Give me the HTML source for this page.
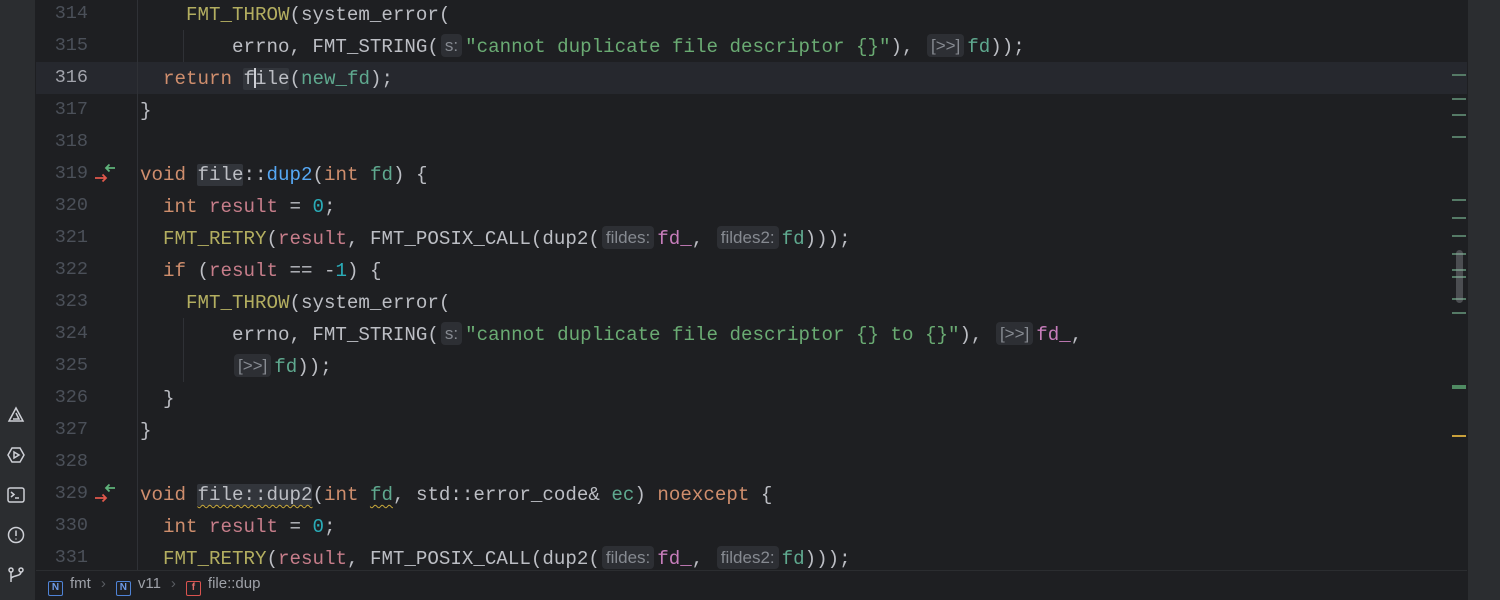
<!DOCTYPE html>
<html><head><meta charset="utf-8"><style>
*{margin:0;padding:0;box-sizing:border-box}
body{width:1500px;height:600px;background:#1e1f22;overflow:hidden;position:relative;font-family:"Liberation Mono",monospace;}
#side{position:absolute;left:0;top:0;width:36px;height:600px;background:#2b2d30;border-right:1px solid #1e1f22}
#rbar{position:absolute;left:1467px;top:0;width:33px;height:600px;background:#2b2d30;border-left:1px solid #1e1f22}
.cur{position:absolute;left:36px;top:62px;width:1431px;height:32px;background:#26282e}
.ln{position:absolute;left:36px;width:52px;text-align:right;font-size:18.5px;color:#4b5059;line-height:32px;height:32px;top:0}
.code{position:absolute;left:140px;font-size:19.17px;line-height:32px;height:32px;white-space:pre;color:#bcbec4;margin-top:1px}
.k{color:#cf8e6d}.m{color:#b3ae60}.f{color:#56a8f5}.p{color:#5fa98f}.v{color:#c77dbb}.r{color:#c67d8a}.s{color:#6aab73}.n{color:#2aacb8}
.h{display:inline-block;font-family:"Liberation Sans",sans-serif;font-size:17px;color:#868a91;background:#2d2f34;border-radius:4px;padding:0 4px;line-height:23px;margin:0 3px 0 2px;vertical-align:1px}
.hl{background:#32353b;border-radius:2px}
.sq{text-decoration:underline wavy #c9a93b;text-underline-offset:4px;text-decoration-thickness:1px}
.guide{position:absolute;width:1px;background:#2f3136}
.mk{position:absolute;left:1452px;width:14px;height:2px;background:#557a66}
#bc{position:absolute;left:36px;top:570px;width:1431px;height:30px;border-top:1px solid #2b2d30;font-family:"Liberation Sans",sans-serif;font-size:15px;color:#9ea1a8;line-height:26px}
.bi{display:inline-block;width:15px;height:15px;border:1.5px solid #4f83d6;border-radius:2px;font-size:10px;line-height:12px;text-align:center;color:#6e9be8;vertical-align:-2px;margin-right:7px;font-weight:bold}
.ic{position:absolute;left:6px;width:20px;height:20px}
</style></head><body>
<div id="side">
<svg class="ic" style="top:405px" viewBox="0 0 20 20" fill="none" stroke="#ced0d6" stroke-width="1.5"><path d="M10 3L17 16H3Z"/><path d="M10 8L13 14H7"/></svg>
<svg class="ic" style="top:445px" viewBox="0 0 20 20" fill="none" stroke="#ced0d6" stroke-width="1.5"><path d="M6 3H14L18 10L14 17H6L2 10Z"/><path d="M8 7L13 10L8 13Z"/></svg>
<svg class="ic" style="top:485px" viewBox="0 0 20 20" fill="none" stroke="#ced0d6" stroke-width="1.5"><rect x="2" y="3" width="16" height="14" rx="2"/><path d="M5 7L8 9.5L5 12M9 13H13"/></svg>
<svg class="ic" style="top:525px" viewBox="0 0 20 20" fill="none" stroke="#ced0d6" stroke-width="1.5"><circle cx="10" cy="10" r="7.5"/><path d="M10 5.5V11M10 13.5V14.5"/></svg>
<svg class="ic" style="top:565px" viewBox="0 0 20 20" fill="none" stroke="#ced0d6" stroke-width="1.5"><circle cx="5" cy="5" r="2"/><circle cx="15" cy="5" r="2"/><path d="M5 7V17M15 7C15 12 5 10 5 14"/></svg>
</div>
<div class="cur"></div>
<div class="guide" style="left:137px;top:0;height:570px"></div>
<div class="guide" style="left:183px;top:30px;height:32px"></div>
<div class="guide" style="left:183px;top:318px;height:64px"></div>

<div class="ln" style="top:-2px">314</div>
<div class="ln" style="top:30px">315</div>
<div class="ln" style="top:62px;color:#a1a3ab">316</div>
<div class="ln" style="top:94px">317</div>
<div class="ln" style="top:126px">318</div>
<div class="ln" style="top:158px">319</div>
<div class="ln" style="top:190px">320</div>
<div class="ln" style="top:222px">321</div>
<div class="ln" style="top:254px">322</div>
<div class="ln" style="top:286px">323</div>
<div class="ln" style="top:318px">324</div>
<div class="ln" style="top:350px">325</div>
<div class="ln" style="top:382px">326</div>
<div class="ln" style="top:414px">327</div>
<div class="ln" style="top:446px">328</div>
<div class="ln" style="top:478px">329</div>
<div class="ln" style="top:510px">330</div>
<div class="ln" style="top:542px">331</div>

<svg style="position:absolute;left:92px;top:160px" width="26" height="26" viewBox="0 0 26 26" fill="none" stroke-width="1.8"><path d="M23 8H14M17.5 4.5L14 8L17.5 11.5" stroke="#5fb37a"/><path d="M3 18H14M10.5 14.5L14 18L10.5 21.5" stroke="#e0584b"/></svg>
<svg style="position:absolute;left:92px;top:480px" width="26" height="26" viewBox="0 0 26 26" fill="none" stroke-width="1.8"><path d="M23 8H14M17.5 4.5L14 8L17.5 11.5" stroke="#5fb37a"/><path d="M3 18H14M10.5 14.5L14 18L10.5 21.5" stroke="#e0584b"/></svg>

<div class="code" style="top:-2px">    <span class="m">FMT_THROW</span>(system_error(</div>
<div class="code" style="top:30px">        errno, FMT_STRING(<span class="h">s:</span><span class="s">"cannot duplicate file descriptor {}"</span>), <span class="h">[&gt;&gt;]</span><span class="p">fd</span>));</div>
<div class="code" style="top:62px">  <span class="k">return</span> <span class="hl">file</span>(<span class="p">new_fd</span>);</div>
<div style="position:absolute;left:254px;top:68px;width:2px;height:20px;background:#ced0d6"></div>
<div class="code" style="top:94px">}</div>
<div class="code" style="top:158px"><span class="k">void</span> <span class="hl">file</span>::<span class="f">dup2</span>(<span class="k">int</span> <span class="p">fd</span>) {</div>
<div class="code" style="top:190px">  <span class="k">int</span> <span class="r">result</span> = <span class="n">0</span>;</div>
<div class="code" style="top:222px">  <span class="m">FMT_RETRY</span>(<span class="r">result</span>, FMT_POSIX_CALL(dup2(<span class="h">fildes:</span><span class="v">fd_</span>, <span class="h">fildes2:</span><span class="p">fd</span>)));</div>
<div class="code" style="top:254px">  <span class="k">if</span> (<span class="r">result</span> == -<span class="n">1</span>) {</div>
<div class="code" style="top:286px">    <span class="m">FMT_THROW</span>(system_error(</div>
<div class="code" style="top:318px">        errno, FMT_STRING(<span class="h">s:</span><span class="s">"cannot duplicate file descriptor {} to {}"</span>), <span class="h">[&gt;&gt;]</span><span class="v">fd_</span>,</div>
<div class="code" style="top:350px">        <span class="h">[&gt;&gt;]</span><span class="p">fd</span>));</div>
<div class="code" style="top:382px">  }</div>
<div class="code" style="top:414px">}</div>
<div class="code" style="top:478px"><span class="k">void</span> <span class="hl sq">file::dup2</span>(<span class="k">int</span> <span class="p sq">fd</span>, std::error_code&amp; <span class="p">ec</span>) <span class="k">noexcept</span> {</div>
<div class="code" style="top:510px">  <span class="k">int</span> <span class="r">result</span> = <span class="n">0</span>;</div>
<div class="code" style="top:542px">  <span class="m">FMT_RETRY</span>(<span class="r">result</span>, FMT_POSIX_CALL(dup2(<span class="h">fildes:</span><span class="v">fd_</span>, <span class="h">fildes2:</span><span class="p">fd</span>)));</div>

<div class="mk" style="top:74px"></div><div class="mk" style="top:98px"></div><div class="mk" style="top:114px"></div><div class="mk" style="top:136px"></div>
<div class="mk" style="top:199px"></div><div class="mk" style="top:217px"></div><div class="mk" style="top:235px"></div><div class="mk" style="top:253px"></div>
<div class="mk" style="top:269px"></div><div class="mk" style="top:276px"></div><div class="mk" style="top:298px"></div><div class="mk" style="top:312px"></div>
<div class="mk" style="top:385px;height:4px;background:#4f8a62"></div>
<div class="mk" style="top:435px;background:#c9a03b"></div>
<div style="position:absolute;left:1456px;top:250px;width:7px;height:53px;border-radius:4px;background:rgba(160,163,170,0.35)"></div>

<div id="rbar"></div>
<div id="bc"><span style="margin-left:12px"><span class="bi">N</span>fmt</span><span style="color:#5a5d63;margin:0 10px">›</span><span class="bi">N</span>v11<span style="color:#5a5d63;margin:0 10px">›</span><span class="bi" style="border-color:#d9534f;color:#e06c68">f</span>file::dup</div>
</body></html>
